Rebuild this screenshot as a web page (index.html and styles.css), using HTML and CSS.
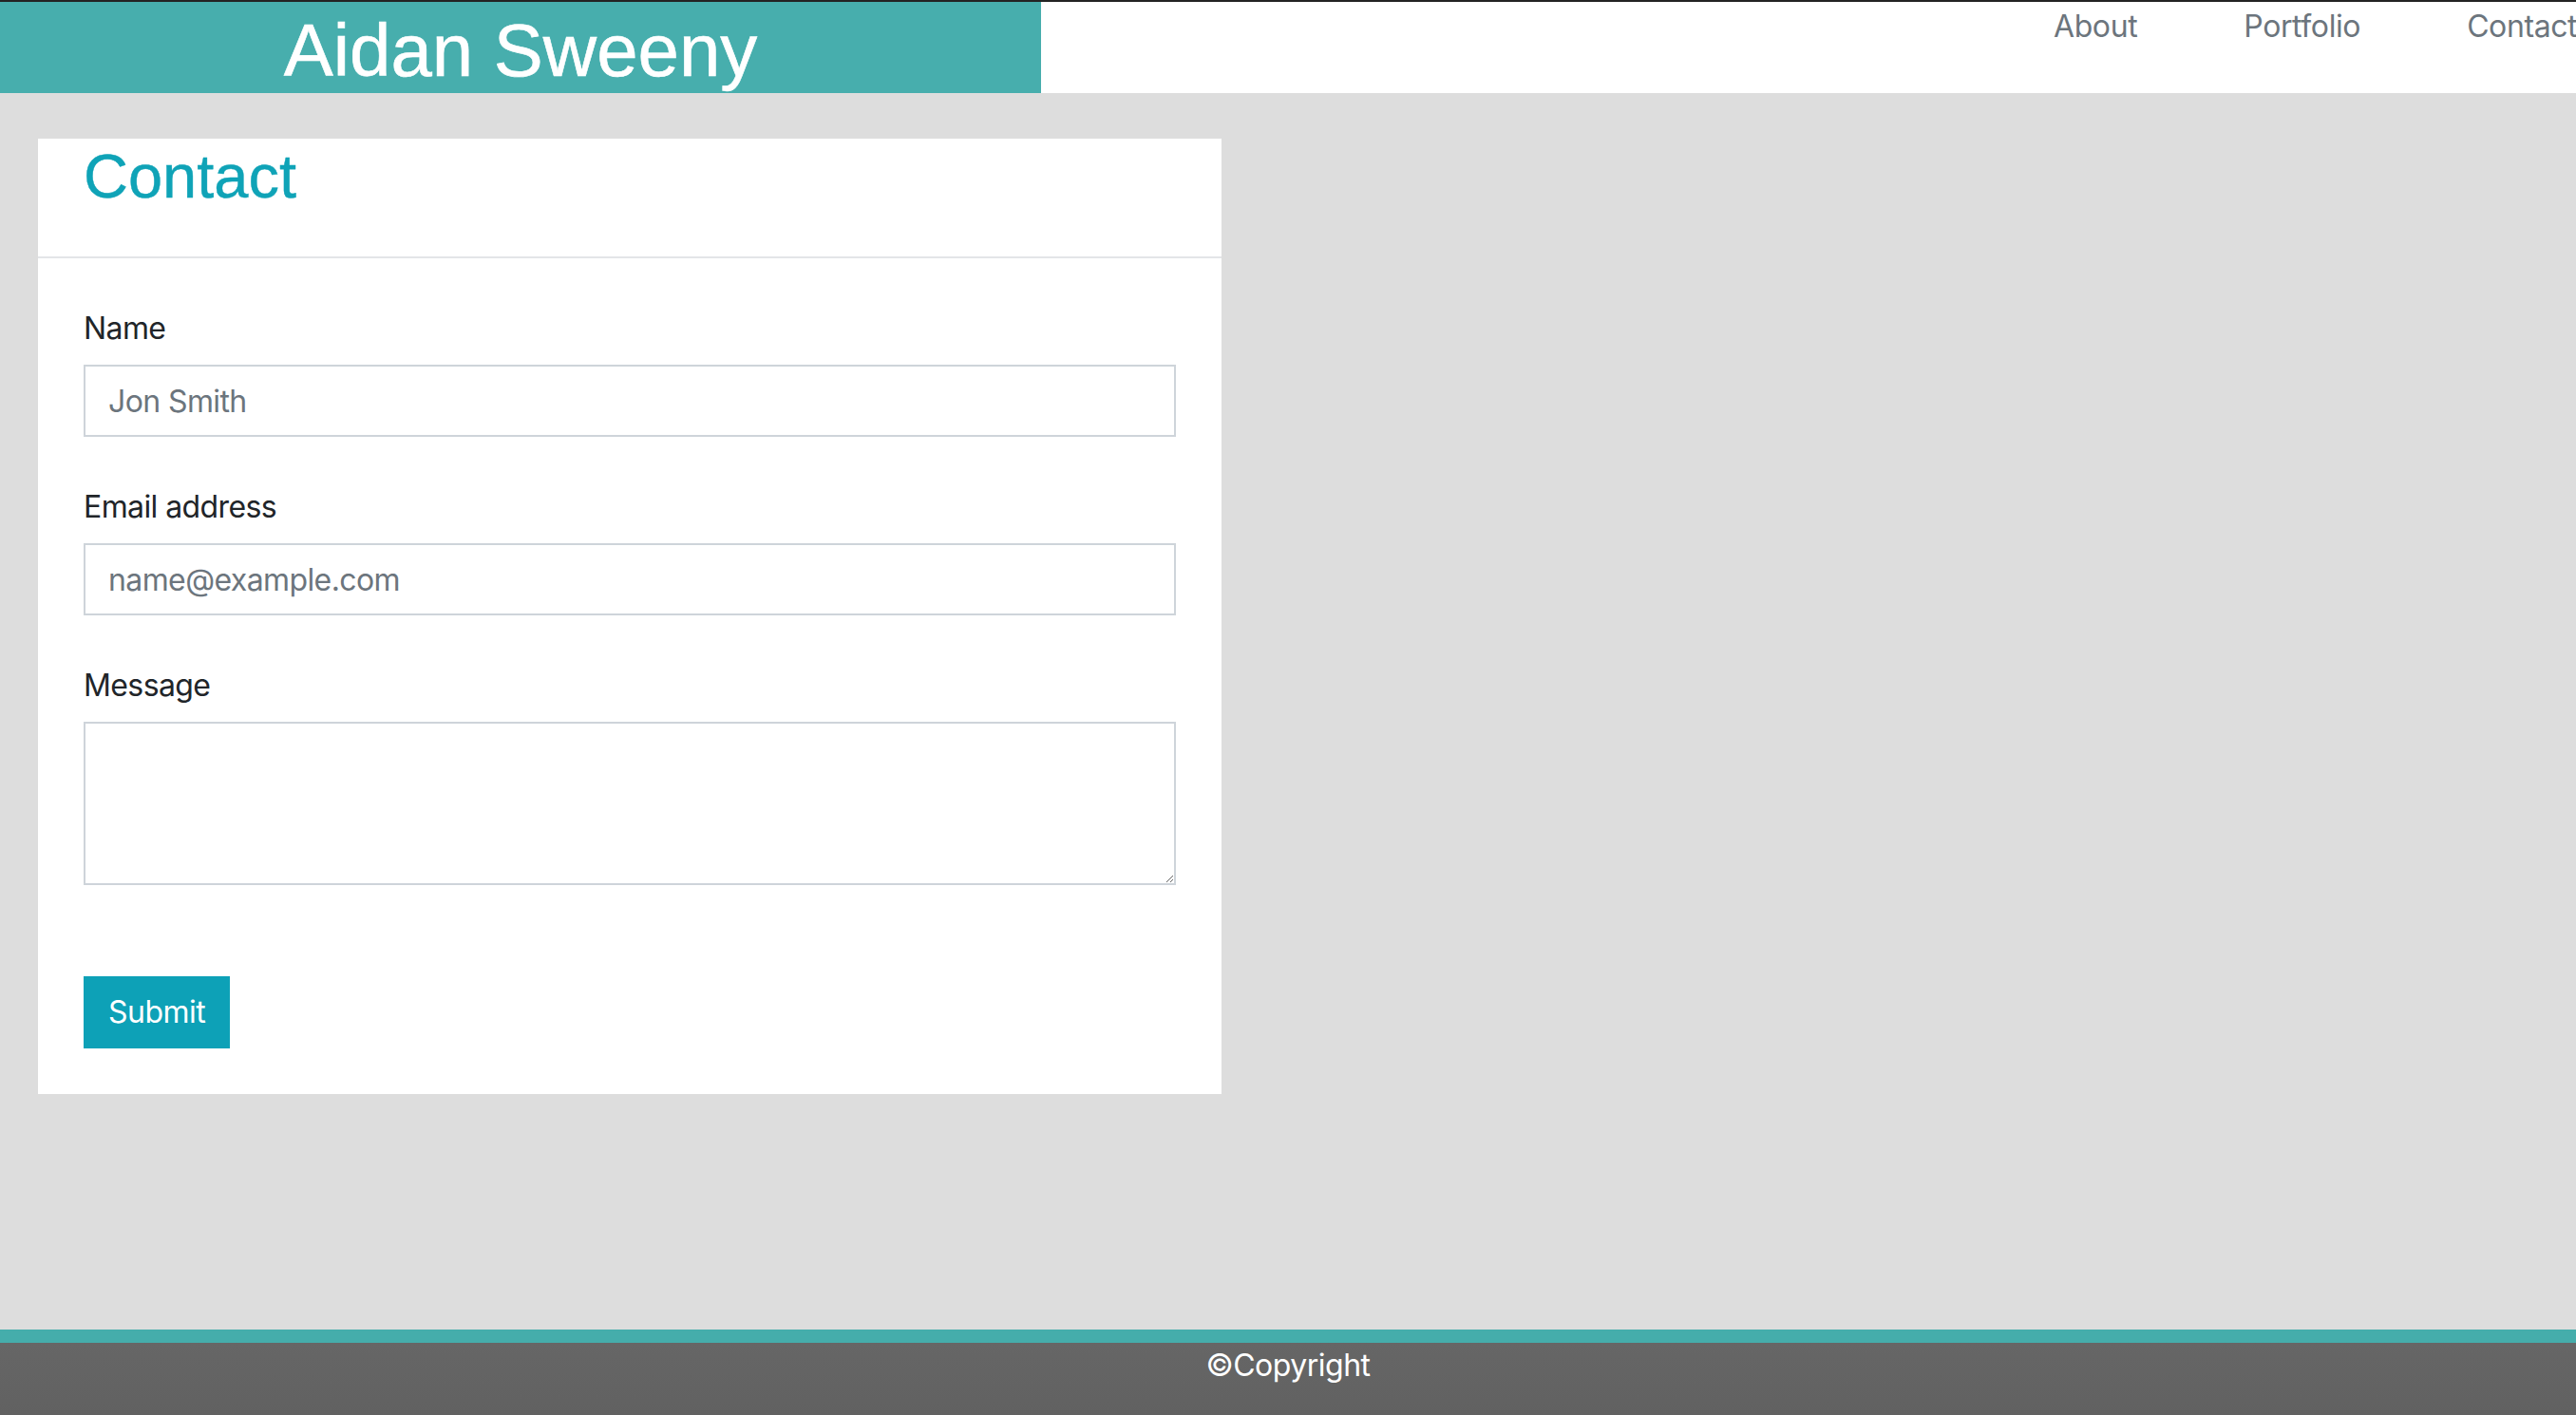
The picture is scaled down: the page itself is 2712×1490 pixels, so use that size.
FILE: index.html
```html
<!DOCTYPE html>
<html lang="en">
<head>
<meta charset="utf-8">
<title>Aidan Sweeny - Contact</title>
<link rel="stylesheet" href="styles.css">
</head>
<body>
<div class="page">
  <header class="topbar">
    <div class="brand"><h1 class="brand-title">Aidan Sweeny</h1></div>
    <nav class="nav">
      <a class="nav-link" href="#">About</a>
      <a class="nav-link" href="#">Portfolio</a>
      <a class="nav-link" href="#">Contact</a>
    </nav>
  </header>
  <main class="main">
    <section class="card">
      <div class="card-header"><h2 class="card-title">Contact</h2></div>
      <form class="card-body">
        <div class="field">
          <label class="field-label" for="name">Name</label>
          <input class="field-input" id="name" type="text" placeholder="Jon Smith">
        </div>
        <div class="field">
          <label class="field-label" for="email">Email address</label>
          <input class="field-input" id="email" type="email" placeholder="name@example.com">
        </div>
        <div class="field field-last">
          <label class="field-label" for="msg">Message</label>
          <textarea class="field-input field-area" id="msg" rows="3"></textarea>
        </div>
        <button class="btn-submit" type="button">Submit</button>
      </form>
    </section>
  </main>
  <footer class="footer">©Copyright</footer>
</div>
</body>
</html>
```

FILE: styles.css
```css
* { box-sizing: border-box; }
html, body { margin: 0; padding: 0; }
body {
  font-family: Inter, "Noto Sans", "Liberation Sans", sans-serif;
  font-size: 32px;
  line-height: 48px;
  color: #212529;
  background: #dddddd;
}
.page {
  min-height: 100vh;
  display: flex;
  flex-direction: column;
  border-top: 2px solid #232323;
  overflow: hidden;
}
.topbar {
  display: flex;
  height: 96px;
  background: #ffffff;
  overflow: hidden;
  flex: none;
}
.brand {
  width: 1096px;
  flex: none;
  background: #47aead;
  display: flex;
  justify-content: center;
  padding-top: 12px;
}
.brand-title {
  margin: 0;
  font-family: "Liberation Sans", Arial, sans-serif;
  font-weight: 400;
  font-size: 78px;
  line-height: 78px;
  color: #ffffff;
  white-space: nowrap;
  -webkit-text-stroke: 0.6px #ffffff;
}
.nav {
  display: flex;
  gap: 112px;
  padding-left: 1066px;
  padding-top: 2px;
  flex: 1;
  white-space: nowrap;
}
.nav-link {
  color: #6c757d;
  text-decoration: none;
  letter-spacing: -0.4px;
}
.main {
  flex: 1;
  padding: 48px 0 0 40px;
}
.card {
  width: 1246px;
  background: #ffffff;
}
.card-header {
  height: 126px;
  padding: 1px 48px 0;
  border-bottom: 2px solid #e3e5e8;
}
.card-title {
  margin: 0;
  font-family: "Liberation Sans", Arial, sans-serif;
  font-weight: 400;
  font-size: 65px;
  line-height: 77px;
  color: #0fa3b7;
  -webkit-text-stroke: 0.4px #0fa3b7;
}
.card-body {
  padding: 48px;
  display: flex;
  flex-direction: column;
  align-items: flex-start;
}
.field {
  width: 100%;
  margin-bottom: 48px;
}
.field-last { margin-bottom: 96px; }
.field-label {
  display: block;
  padding-top: 2px;
  margin-bottom: 14px;
  letter-spacing: -0.6px;
}
.field-input {
  display: block;
  width: 100%;
  height: 76px;
  padding: 12px 24px;
  border: 2px solid #ced4da;
  border-radius: 0;
  font-family: Inter, "Noto Sans", sans-serif;
  font-size: 32px;
  line-height: 48px;
  color: #212529;
  background: #ffffff;
  outline: none;
  letter-spacing: -0.6px;
}
.field-input::placeholder { color: #6c757d; opacity: 1; }
.field-area {
  height: 172px;
  resize: vertical;
}
.btn-submit {
  height: 76px;
  padding: 12px 24px;
  border: 2px solid #0da1b7;
  border-radius: 0;
  background: #0da1b7;
  color: #ffffff;
  font-family: Inter, "Noto Sans", sans-serif;
  font-size: 32px;
  line-height: 48px;
  letter-spacing: -0.5px;
  cursor: pointer;
}
.footer {
  flex: none;
  height: 90px;
  border-top: 14px solid #45adab;
  background: linear-gradient(#666666, #616161);
  color: #ffffff;
  text-align: center;
  line-height: 48px;
  letter-spacing: -0.5px;
}
```
